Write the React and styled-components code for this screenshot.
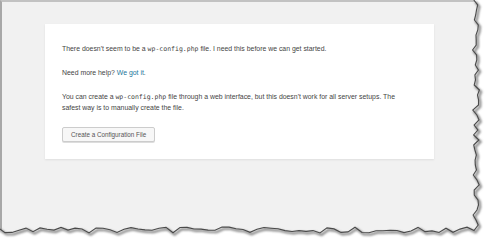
import React from "react";
import styled, { createGlobalStyle } from "styled-components";

const GlobalStyle = createGlobalStyle`
  html, body {
    margin: 0;
    padding: 0;
    background: #fff;
  }
`;

// deterministic jitter for the torn paper edge
const rnd = (i) => {
  const x = Math.sin(i * 12.9898 + 78.233) * 43758.5453;
  return x - Math.floor(x);
};

const buildEdge = () => {
  const right = [];
  for (let y = 0, i = 0; y <= 226; y += 5, i++) {
    right.push([476 + (rnd(i) - 0.5) * 7, y]);
  }
  const bottom = [];
  for (let x = 474, i = 100; x >= -4; x -= 7, i++) {
    bottom.push([x, 230 + (rnd(i) - 0.5) * 6]);
  }
  return right.concat(bottom);
};

const edge = buildEdge();
const edgeLine = edge.map(([x, y]) => `${x.toFixed(1)},${y.toFixed(1)}`).join(" ");
const holePath =
  "M0,0 H486 V240 H0 Z M-2,-2 " +
  edge.map(([x, y]) => `L${x.toFixed(1)},${y.toFixed(1)}`).join(" ") +
  " L-2,240 Z";

function App() {
  return (
    <>
      <GlobalStyle />
      <Frame>
        <Screen>
          <Card>
            <Text>
              There doesn't seem to be a <Code>wp-config.php</Code> file. I need this
              before we can get started.
            </Text>
            <Text>
              Need more help? <Link href="#">We got it</Link>.
            </Text>
            <Text>
              You can create a <Code>wp-config.php</Code> file through a web interface,
              but this doesn't work for all server setups. The safest way is to manually
              create the file.
            </Text>
            <Button>Create a Configuration File</Button>
          </Card>
        </Screen>
        <Torn viewBox="0 0 486 240" width="486" height="240">
          <defs>
            <filter id="blur" x="-10%" y="-10%" width="120%" height="120%">
              <feGaussianBlur stdDeviation="0.9" />
            </filter>
          </defs>
          <path d={holePath} fill="#fff" fillRule="evenodd" />
          <polyline
            points={edgeLine}
            fill="none"
            stroke="#8a8a8a"
            strokeWidth="2.4"
            transform="translate(1.6,1.8)"
            filter="url(#blur)"
          />
          <polyline points={edgeLine} fill="none" stroke="#4a4a4a" strokeWidth="1.1" />
        </Torn>
      </Frame>
    </>
  );
}

const Frame = styled.div`
  position: relative;
  width: 486px;
  height: 240px;
  overflow: hidden;
  background: #fff;
`;

const Screen = styled.div`
  box-sizing: border-box;
  width: 486px;
  height: 240px;
  background: #f1f1f1;
  border-top: 2px solid #c2c2c2;
  border-left: 2px solid #a8a8a8;
  padding: 22px 0 0 43px;
`;

const Card = styled.div`
  box-sizing: border-box;
  width: 389px;
  background: #fff;
  box-shadow: 0 1px 2px rgba(0, 0, 0, 0.08);
  padding: 20px 22px 17px 17px;
  font-family: "Liberation Sans", Arial, sans-serif;
  font-size: 6.9px;
  line-height: 10.5px;
  color: #444;
`;

const Text = styled.p`
  margin: 0 0 13.5px 0;
`;

const Code = styled.code`
  font-family: "DejaVu Sans Mono", "Liberation Mono", monospace;
  font-size: 6.5px;
  color: #444;
`;

const Link = styled.a`
  color: #21759b;
  text-decoration: none;
`;

const Button = styled.button`
  box-sizing: border-box;
  display: block;
  height: 15px;
  padding: 0 8px;
  margin-top: 4px;
  border: 1px solid #ccc;
  border-radius: 2px;
  background: #f7f7f7;
  box-shadow: 0 1px 0 #ddd;
  font-family: "Liberation Sans", Arial, sans-serif;
  font-size: 6.3px;
  color: #555;
`;

const Torn = styled.svg`
  position: absolute;
  top: 0;
  left: 0;
  pointer-events: none;
`;

export default App;
